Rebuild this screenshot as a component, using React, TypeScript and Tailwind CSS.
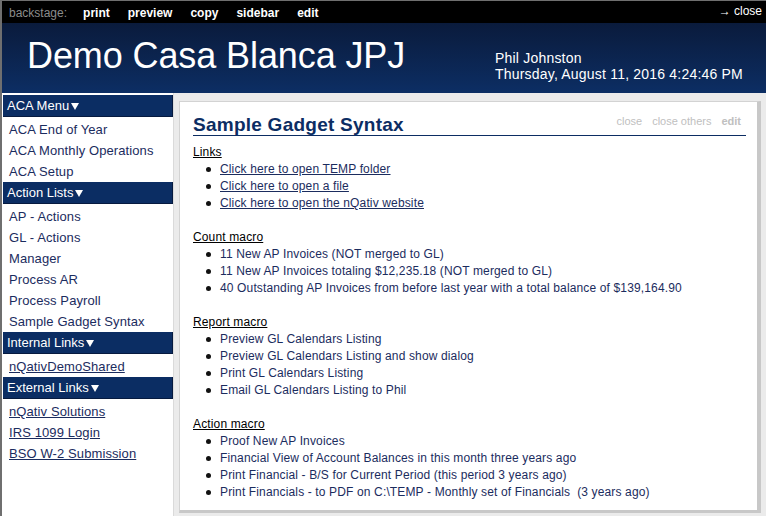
import React from 'react'

const sideSections = [
  { title: 'ACA Menu', items: ['ACA End of Year', 'ACA Monthly Operations', 'ACA Setup'], link: false },
  {
    title: 'Action Lists',
    items: ['AP - Actions', 'GL - Actions', 'Manager', 'Process AR', 'Process Payroll', 'Sample Gadget Syntax'],
    link: false,
  },
  { title: 'Internal Links', items: ['nQativDemoShared'], link: true },
  { title: 'External Links', items: ['nQativ Solutions', 'IRS 1099 Login', 'BSO W-2 Submission'], link: true },
]

const gadgetSections = [
  {
    title: 'Links',
    link: true,
    items: ['Click here to open TEMP folder', 'Click here to open a file', 'Click here to open the nQativ website'],
  },
  {
    title: 'Count macro',
    link: false,
    items: [
      '11 New AP Invoices (NOT merged to GL)',
      '11 New AP Invoices totaling $12,235.18 (NOT merged to GL)',
      '40 Outstanding AP Invoices from before last year with a total balance of $139,164.90',
    ],
  },
  {
    title: 'Report macro',
    link: false,
    items: [
      'Preview GL Calendars Listing',
      'Preview GL Calendars Listing and show dialog',
      'Print GL Calendars Listing',
      'Email GL Calendars Listing to Phil',
    ],
  },
  {
    title: 'Action macro',
    link: false,
    items: [
      'Proof New AP Invoices',
      'Financial View of Account Balances in this month three years ago',
      'Print Financial - B/S for Current Period (this period 3 years ago)',
      'Print Financials - to PDF on C:\\TEMP - Monthly set of Financials\u00a0 (3 years ago)',
    ],
  },
]

function TopBar() {
  return (
    <div className="flex h-[22px] items-start justify-between bg-black text-[12px] leading-[22px]">
      <div className="flex pl-[7px] pt-[1px]">
        <span className="text-[#8c8c8c]">backstage:</span>
        <div className="ml-[16px] flex gap-[18px] font-bold text-white">
          <span>print</span>
          <span>preview</span>
          <span>copy</span>
          <span>sidebar</span>
          <span>edit</span>
        </div>
      </div>
      <span className="-mt-[1px] pr-[4px] text-white">→ close</span>
    </div>
  )
}

function Header() {
  return (
    <div className="flex h-[70px] bg-gradient-to-b from-[#0a1b3c] to-[#0c2e64] text-white">
      <div className="w-[493px] pl-[25px] pt-[15px] text-[36px] leading-[36px] tracking-[-0.1px]">
        Demo Casa Blanca JPJ
      </div>
      <div className="pt-[27px] text-[14px] leading-[16px] tracking-[0.2px]">
        <div>Phil Johnston</div>
        <div>Thursday, August 11, 2016 4:24:46 PM</div>
      </div>
    </div>
  )
}

function Sidebar() {
  return (
    <div className="w-[172px] shrink-0 border-r border-[#dadada] bg-white pt-[2px]">
      {sideSections.map((section) => (
        <div key={section.title}>
          <div className="mb-[2px] ml-[1px] flex h-[22px] items-center border-b border-r border-[#061a3f] bg-[#0b2d63] pl-[4px] text-[13px] leading-[22px] text-white">
            <span>{section.title}</span>
            <svg className="ml-[2px] mt-[1px]" width="8" height="7" viewBox="0 0 8 7">
              <polygon points="0,0 8,0 4,7" fill="#ffffff" />
            </svg>
          </div>
          {section.items.map((item) => (
            <div
              key={item}
              className={`h-[21px] pl-[7px] text-[13px] leading-[21px] tracking-[0.1px] text-[#1b2c5e] ${section.link ? 'underline' : ''}`}
            >
              {item}
            </div>
          ))}
        </div>
      ))}
    </div>
  )
}

function Gadget() {
  return (
    <div className="flex-1 overflow-hidden border-b-[3px] border-l border-r-[4px] border-t border-b-[#c8c8c8] border-l-[#d3d3d3] border-r-[#c8c8c8] border-t-[#d3d3d3] bg-white pl-[13px] pr-[11px] pt-[13px]">
      <div className="flex items-start justify-between border-b border-[#0c2d63]">
        <h2 className="h-[20px] text-[19px] font-bold leading-[20px] tracking-[0.25px] text-[#0c2d63]">
          Sample Gadget Syntax
        </h2>
        <div className="mt-0 flex gap-[10px] pr-[5px] text-[11px] leading-[13px] text-[#c0c0c0]">
          <span>close</span>
          <span>close others</span>
          <span className="font-bold">edit</span>
        </div>
      </div>
      <div className="mt-[8px] text-[12px] leading-[17px] tracking-[0.14px]">
        {gadgetSections.map((section) => (
          <div key={section.title} className="mb-[17px]">
            <div className="text-black underline">{section.title}</div>
            <ul>
              {section.items.map((item) => (
                <li key={item} className="flex h-[17px] items-center">
                  <span className="ml-[13px] h-[5px] w-[5px] shrink-0 rounded-full bg-[#111]" />
                  <span className={`ml-[9px] whitespace-nowrap text-[#1b2c5e] ${section.link ? 'underline' : ''}`}>
                    {item}
                  </span>
                </li>
              ))}
            </ul>
          </div>
        ))}
      </div>
    </div>
  )
}

export default function App() {
  return (
    <div className="flex h-[516px] w-[766px] flex-col overflow-hidden border-l-2 border-t border-[#6f6f6f] bg-white font-['Liberation_Sans',Arial,sans-serif]">
      <TopBar />
      <Header />
      <div className="flex min-h-0 flex-1">
        <Sidebar />
        <div className="flex flex-1 bg-[#ebebeb] pb-[3px] pl-[5px] pr-[5px] pt-[8px]">
          <Gadget />
        </div>
      </div>
    </div>
  )
}
